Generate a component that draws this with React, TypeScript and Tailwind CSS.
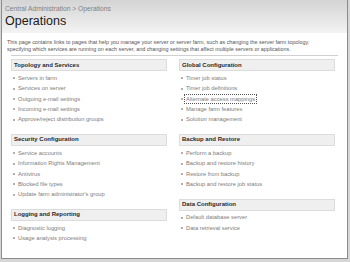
import React from 'react';

type Section = { title: string; items: string[]; focus?: string };

const left: Section[] = [
  {
    title: 'Topology and Services',
    items: [
      'Servers in farm',
      'Services on server',
      'Outgoing e-mail settings',
      'Incoming e-mail settings',
      'Approve/reject distribution groups',
    ],
  },
  {
    title: 'Security Configuration',
    items: [
      'Service accounts',
      'Information Rights Management',
      'Antivirus',
      'Blocked file types',
      "Update farm administrator's group",
    ],
  },
  {
    title: 'Logging and Reporting',
    items: ['Diagnostic logging', 'Usage analysis processing'],
  },
];

const right: Section[] = [
  {
    title: 'Global Configuration',
    items: [
      'Timer job status',
      'Timer job definitions',
      'Alternate access mappings',
      'Manage farm features',
      'Solution management',
    ],
    focus: 'Alternate access mappings',
  },
  {
    title: 'Backup and Restore',
    items: [
      'Perform a backup',
      'Backup and restore history',
      'Restore from backup',
      'Backup and restore job status',
    ],
  },
  {
    title: 'Data Configuration',
    items: ['Default database server', 'Data retrieval service'],
  },
];

function Block({ s }: { s: Section }) {
  return (
    <div className="mb-[9px]">
      <div className="h-[12px] bg-[#efefef] border border-[#dcdcdc] flex items-center px-[2px] text-[6px] font-bold text-[#2a2a2a]">
        {s.title}
      </div>
      <ul className="pt-[2px]">
        {s.items.map(it => (
          <li key={it} className="flex items-center h-[10.4px] pl-[2px] text-[5.75px] text-[#7c7c7c]">
            <span className="w-[2px] h-[2px] bg-[#b0b0b0] mr-[3px]" />
            <span className={it === s.focus ? 'outline outline-1 outline-dotted outline-[#555] px-[1px] -ml-[1px]' : ''}>{it}</span>
          </li>
        ))}
      </ul>
    </div>
  );
}

export default function App() {
  return (
    <div
      className="w-[350px] h-[262px] bg-[#d6d6d6] pl-[1px] pr-[2px] pb-[3px] overflow-hidden"
      style={{ fontFamily: '"Liberation Sans", Arial, sans-serif' }}
    >
      <div className="h-full border-x border-b border-[#8c8c8c] bg-white flex flex-col">
        <div className="h-[33px] bg-gradient-to-b from-[#d4d4d4] to-[#f3f3f3] px-[3px] pt-[5px]">
          <div className="text-[6.7px] leading-[8px] text-[#808080]">Central Administration &gt; Operations</div>
          <div className="text-[12.5px] leading-[14px] text-[#1a1a1a] mt-[1px]">Operations</div>
        </div>
        <div className="px-[5px] pt-[6px] text-[5.4px] leading-[6.5px] text-[#555]">
          <div className="whitespace-nowrap">This page contains links to pages that help you manage your server or server farm, such as changing the server farm topology,</div>
          <div className="whitespace-nowrap">specifying which services are running on each server, and changing settings that affect multiple servers or applications.</div>
        </div>
        <div className="mx-[9px] mt-[3px] border-t border-[#d0d0d0]" />
        <div className="flex gap-[12px] pl-[9px] pr-[12px] pt-[3px]">
          <div className="flex-1">
            {left.map(s => <Block key={s.title} s={s} />)}
          </div>
          <div className="flex-1">
            {right.map(s => <Block key={s.title} s={s} />)}
          </div>
        </div>
      </div>
    </div>
  );
}
